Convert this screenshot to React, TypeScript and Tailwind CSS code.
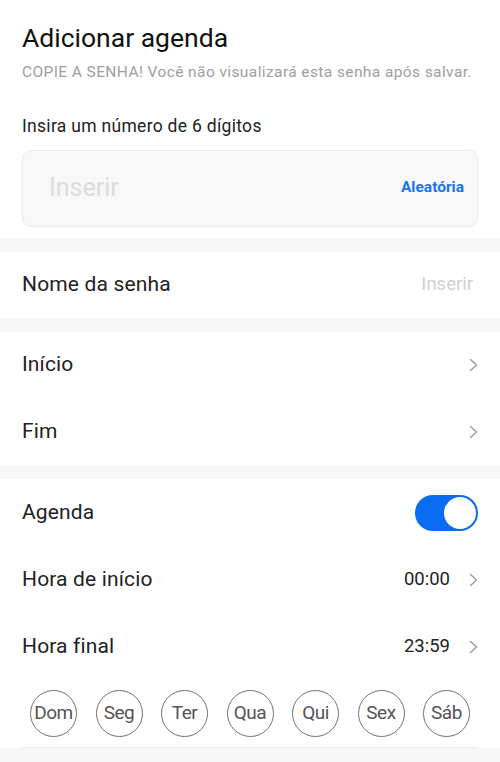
import React, { useState } from "react";

const days = ["Dom", "Seg", "Ter", "Qua", "Qui", "Sex", "Sáb"];

function Chevron() {
  return (
    <svg width="9" height="14" viewBox="0 0 9 14" fill="none" stroke="#9a9a9a" strokeWidth="1.4" strokeLinecap="round" strokeLinejoin="round">
      <path d="M1.5 1.5l6 5.5-6 5.5" />
    </svg>
  );
}

function Row({ label, value, chevron }: { label: string; value?: string; chevron?: boolean }) {
  return (
    <div className="flex items-center h-[67px] px-[22px]">
      <span className="flex-1 text-[21px] tracking-[0.15px] text-[#222]">{label}</span>
      {value && <span className="text-[18.5px] text-[#222] mr-[19px]">{value}</span>}
      {chevron && <Chevron />}
    </div>
  );
}

export default function App() {
  const [on, setOn] = useState(true);

  return (
    <div className="w-[500px] h-[762px] bg-[#f7f7f7] overflow-hidden" style={{ fontFamily: "Roboto, 'Noto Sans', sans-serif" }}>
      {/* Header + code input */}
      <div className="bg-white px-[22px] pt-[21px] pb-[11px]">
        <h1 className="text-[26.5px] leading-[34px] text-[#111]">Adicionar agenda</h1>
        <p className="text-[15.5px] tracking-[0.4px] text-[#9e9e9e] mt-[6px]">
          COPIE A SENHA! Você não visualizará esta senha após salvar.
        </p>
        <p className="text-[17.5px] tracking-[0.3px] text-[#222] mt-[29px]">Insira um número de 6 dígitos</p>
        <div className="mt-[10px] h-[77px] rounded-[9px] border border-[#ebebeb] bg-[#f8f8f8] flex items-center pl-[26px] pr-[13px]">
          <span className="flex-1 text-[25px] text-[#dcdcdc]">Inserir</span>
          <span className="text-[15.5px] font-bold text-[#1a73e8]">Aleatória</span>
        </div>
      </div>

      {/* Name */}
      <div className="bg-white mt-[14px] h-[66px] flex items-center px-[22px]">
        <span className="flex-1 text-[21px] tracking-[0.15px] text-[#222]">Nome da senha</span>
        <span className="text-[18.5px] text-[#d0d0d0] mr-[5px]">Inserir</span>
      </div>

      {/* Start / end */}
      <div className="bg-white mt-[14px]">
        <Row label="Início" chevron />
        <Row label="Fim" chevron />
      </div>

      {/* Schedule */}
      <div className="bg-white mt-[13px]">
        <div className="flex items-center h-[68px] px-[22px]">
          <span className="flex-1 text-[21px] tracking-[0.15px] text-[#222]">Agenda</span>
          <button
            onClick={() => setOn(!on)}
            className={`w-[63px] h-[36px] rounded-full flex items-center px-[2px] ${on ? "bg-[#0a6cf0] justify-end" : "bg-[#ddd] justify-start"}`}
          >
            <span className="w-[32px] h-[32px] rounded-full bg-white" />
          </button>
        </div>
        <Row label="Hora de início" value="00:00" chevron />
        <Row label="Hora final" value="23:59" chevron />
        <div className="mx-[22px] h-[67px] border-b border-[#ececec] flex items-center justify-between px-[8px]">
          {days.map((d) => (
            <span
              key={d}
              className="w-[47px] h-[47px] rounded-full border border-[#707070] flex items-center justify-center text-[19px] text-[#555] tracking-tight"
            >
              {d}
            </span>
          ))}
        </div>
      </div>
    </div>
  );
}
